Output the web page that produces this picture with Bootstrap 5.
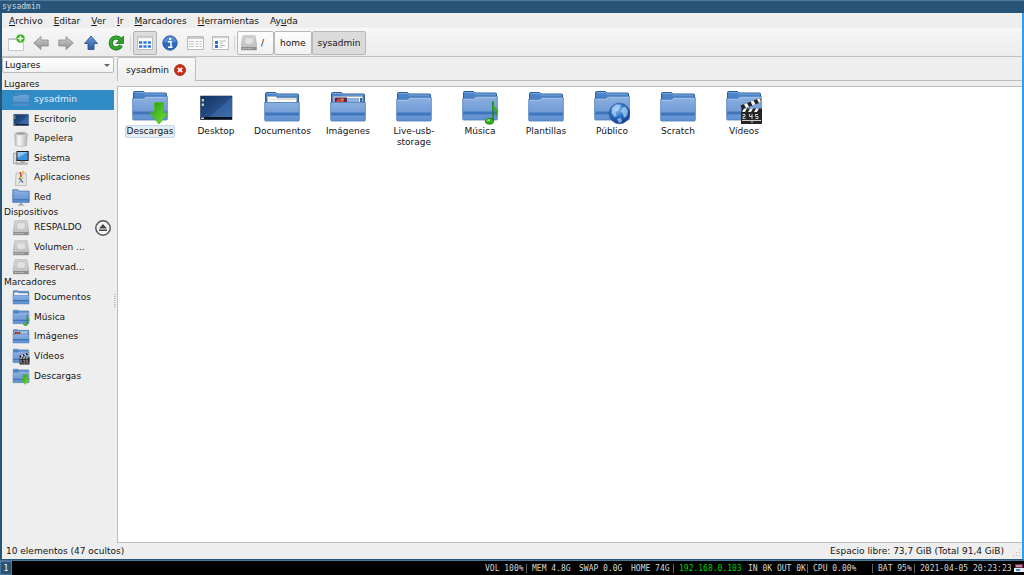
<!DOCTYPE html>
<html lang="es">
<head>
<meta charset="utf-8">
<meta name="viewport" content="width=device-width, initial-scale=1">
<title>sysadmin</title>
<link href="https://cdn.jsdelivr.net/npm/bootstrap@5.3.0/dist/css/bootstrap.min.css" rel="stylesheet">
<style>
  body { font-family: "DejaVu Sans", sans-serif; font-size: 9px; line-height: 11px; color: #141414; background: #000; }
  button, select { font: inherit; color: inherit; }
  svg { display: block; flex: none; }
  .mono { font-family: "DejaVu Sans Mono", monospace; font-size: 8px; line-height: 10px; }
  .titlebar { height: 13px; padding: 1px 2px; background: #285577; border-top: 1px solid #4c7899; color: #cfdbe5; }
  .window { min-height: 0; background: #eee; border-left: 2px solid #285577; border-right: 2px solid #2e9ef4; border-bottom: 1px solid #285577; }
  .menus { height: 15px; padding: 2px; background: #eee; }
  .menus button { border: 0; background: none; padding: 0 6px 0 5px; height: 12px; }
  .menus u { text-underline-offset: 1px; }
  .tools { height: 29px; padding: 1px 2px 0; gap: 1px; background: linear-gradient(#f6f6f6, #ececec); border-top: 1px solid #f8f8f8; border-bottom: 1px solid #c2c2c2; }
  .tool { width: 24px; height: 24px; padding: 0; border: 1px solid transparent; border-radius: 2px; background: none; display: flex; align-items: center; justify-content: center; }
  .tool.active { background: #dcdcdc; border-color: #b2b2b2; }
  .rule { width: 1px; height: 15px; margin: 0 1px; background: #d5d5d5; }
  .crumb { height: 24px; padding: 0 5px; gap: 4px; border: 1px solid #b8b8b8; border-radius: 2px; background: linear-gradient(#fdfdfd, #f1f1f1); display: flex; align-items: center; }
  .crumb.root { padding: 0 9px 0 3px; }
  .crumb.active { background: #dbdbdb; }
  .places { width: 112px; flex: none; }
  .places select { display: block; width: 100%; height: 16px; padding: 0 2px; border: 1px solid #bbb; border-radius: 2px; appearance: none;
    background: linear-gradient(#fff, #f2f2f2); }
  .picker { position: relative; margin-bottom: 6px; }
  .picker::after { content: ""; position: absolute; right: 4px; top: 7px; border: 3px solid transparent; border-top-color: #666; border-bottom: 0; pointer-events: none; }
  .places h2 { font-size: 9px; line-height: 11px; font-weight: 400; margin: 0; padding-left: 2px; }
  .places ul { display: flex; flex-direction: column; margin: 0; padding: 0; list-style: none; }
  .places li { flex: 1 1 0; display: flex; align-items: center; }
  .places a { flex: 1 1 0; min-width: 0; height: 100%; display: flex; align-items: center; gap: 4px; padding-left: 10px; color: inherit; text-decoration: none; }
  .places a.current { background: #308cc6; color: #e3eff8; }
  .places a.current svg { opacity: .6; }
  .rows-3 { height: 59px; } .rows-5 { height: 98px; } .rows-6 { height: 117px; }
  .eject { border: 0; background: none; padding: 0; width: 20px; height: 18px; }
  .splitter { width: 3px; flex: none; }
  .splitter i { display: block; width: 2px; height: 13px; border-left: 1px dotted #bbb; border-right: 1px dotted #ccc; }
  .tabs { height: 24px; }
  .tab { padding: 0 9px 0 8px; gap: 5px; background: linear-gradient(#f8f8f8, #eee); border: 1px solid #bdbdbd; border-bottom: 0; border-radius: 2px 2px 0 0; }
  .tab span { padding-top: 1px; }
  .tab button { border: 0; background: none; padding: 0; }
  .tab-base { border-bottom: 1px solid #bdbdbd; }
  .pane { margin-top: 5px; background: #fff; border: 1px solid #bdbdbd; border-right: 0; min-height: 0; }
  .files { padding: 2px 0; margin-left: -1px; align-content: flex-start; }
  .file { width: 66px; color: inherit; text-decoration: none; text-align: center; }
  .file span { max-width: 60px; padding: 0 1px; border: 1px solid transparent; }
  .file.current span { background: #e4eef7; border-color: #c3d6e6; border-radius: 2px; padding: 0; }
  .status { height: 16px; padding: 1px 18px 0 4px; position: relative; }
  .grip { position: absolute; right: 1px; bottom: 2px; }
  .panel { height: 15px; background: #000; color: #d6d6d6; border-top: 1px solid #4c7899; }
  .desk { width: 12px; border: 1px solid #4c7899; background: #285577; color: #fff; padding: 0; line-height: 11px; }
  .stats { display: grid; grid-template-columns: 47px 47px 52px 48px 69px 65px 65px 42px 98px 12px; align-items: center; white-space: nowrap; }
  .stats span { padding-left: 5px; border-left: 1px solid transparent; height: 9px; line-height: 9px; }
  .stats .bar { border-left-color: #666; }
  .stats .ip { color: #00d000; }
  .stats svg { justify-self: end; }
</style>
</head>
<body class="vh-100 d-flex flex-column overflow-hidden">

<svg width="0" height="0" class="position-absolute" aria-hidden="true">
  <defs>
    <linearGradient id="gFront" x1="0" y1="0" x2="0" y2="1"><stop offset="0" stop-color="#8db0e0"/><stop offset="1" stop-color="#6090d0"/></linearGradient>
    <linearGradient id="gBack" x1="0" y1="0" x2="0" y2="1"><stop offset="0" stop-color="#4f88cb"/><stop offset="1" stop-color="#2f66a9"/></linearGradient>
    <linearGradient id="gGreen" x1="0" y1="0" x2="1" y2="1"><stop offset="0" stop-color="#259a13"/><stop offset="1" stop-color="#7be63c"/></linearGradient>
    <linearGradient id="gGrey" x1="0" y1="0" x2="0" y2="1"><stop offset="0" stop-color="#d0d0d0"/><stop offset="1" stop-color="#8f8f8f"/></linearGradient>
    <linearGradient id="gBlue" x1="0" y1="0" x2="0" y2="1"><stop offset="0" stop-color="#6e9bd8"/><stop offset="1" stop-color="#2c5ba4"/></linearGradient>
    <linearGradient id="gScreen" x1="0" y1="0" x2="1" y2="1"><stop offset="0" stop-color="#12305f"/><stop offset="1" stop-color="#3768a8"/></linearGradient>
    <radialGradient id="gGlobe" cx=".4" cy=".3" r=".7"><stop offset="0" stop-color="#8fc1f2"/><stop offset=".5" stop-color="#2f6fc8"/><stop offset="1" stop-color="#123c8c"/></radialGradient>
    <linearGradient id="gCan" x1="0" y1="0" x2="1" y2="0"><stop offset="0" stop-color="#b5b5b5"/><stop offset=".35" stop-color="#fafafa"/><stop offset="1" stop-color="#b0b0b0"/></linearGradient>
    <linearGradient id="gDisk" x1="0" y1="0" x2="0" y2="1"><stop offset="0" stop-color="#d6d6d6"/><stop offset="1" stop-color="#bcbcbc"/></linearGradient>
  </defs>

  <symbol id="back" viewBox="0 0 36 36"><path d="M1.500 30V4.500Q1.500 3.500 2.500 3.500H11.500L13 5H33.500Q34.500 5 34.500 6V30Z" fill="url(#gBack)" stroke="#2b5c9b"/><path d="M3 4.500H11.500L13 6H33.500" fill="none" stroke="#8ab4e6" stroke-width=".7"/></symbol>
  <symbol id="front" viewBox="0 0 36 36"><path d="M.7 13.500H35.300V31Q35.300 32 34.300 32H1.700Q.7 32 .7 31Z" fill="url(#gFront)" stroke="#4a7dbe" stroke-width=".8"/><path d="M1 23.500H35V26.500H1Z" fill="#3f76bb"/></symbol>
  <symbol id="folder" viewBox="0 0 36 36"><use href="#back"/><path d="M.7 10.500H11.500L14 8.500H35.300V31Q35.300 32 34.300 32H1.700Q.7 32 .7 31Z" fill="url(#gFront)" stroke="#4a7dbe" stroke-width=".8"/><path d="M1.600 11.300H12L14.300 9.300H34.500" fill="none" stroke="#a9c6ec" stroke-width=".8"/><path d="M1 23.500H35V26.500H1Z" fill="#3f76bb"/></symbol>
  <symbol id="docs" viewBox="0 0 36 36"><use href="#back"/><path d="M3.500 14V7.500H12L13 9H32.500V14Z" fill="#fafafa" stroke="#b4b4a8" stroke-width=".7"/><path d="M5 10.500H31" stroke="#e2e2da"/><use href="#front"/></symbol>
  <symbol id="pics" viewBox="0 0 36 36"><use href="#back"/><path d="M3.500 14V7.500H32.500V14Z" fill="#f4f6fa" stroke="#9aa" stroke-width=".5"/><path d="M4.500 8.500H17V13H4.500Z" fill="#5a2555"/><path d="M6 12L9 9L11 11L14 9V13H6Z" fill="#c8453d"/><circle cx="12" cy="10.500" r="1.300" fill="#d8933a"/><path d="M17 9H29V13H17Z" fill="#8fb0dc"/><path d="M30 9H32V13H30Z" fill="#2f62a2"/><use href="#front"/></symbol>
  <symbol id="down" viewBox="0 0 36 36"><use href="#folder" y="-1"/><path d="M22.500 13.500H31.500V24H36L27 35L18 24H22.500Z" fill="url(#gGreen)" stroke="#4cb82a" stroke-width=".9"/></symbol>
  <symbol id="music" viewBox="0 0 36 36"><use href="#folder" y="-1"/><path d="M31 12.500V32" stroke="#188a12" stroke-width="1.600"/><path d="M30.500 12.500Q31 17 34.500 20Q37 23 34 27Q35.500 22 31 19.500Z" fill="#43bb2b" stroke="#188a12" stroke-width=".5"/><ellipse cx="27.500" cy="32.300" rx="4.200" ry="2.900" fill="#35ac20" stroke="#107510" stroke-width=".7"/><ellipse cx="26.500" cy="31.300" rx="1.800" ry="1" fill="#a2ec82"/></symbol>
  <symbol id="globe" viewBox="0 0 36 36"><use href="#folder" y="-1"/><circle cx="25.500" cy="24.500" r="10.300" fill="url(#gGlobe)" stroke="#1d4b96" stroke-width=".6"/><path d="M18 19L22 15.500L27 16L25 20L21.500 23.500L23 27L20.500 28L17.500 24ZM28 19L31.500 17.500L34 22L33 27L30 29L29 25L27 22.500ZM23 30L27 29L28 32.500L25 34Z" fill="#bfe0fa" opacity=".65"/></symbol>
  <symbol id="video" viewBox="0 0 36 36"><use href="#folder" y="-1"/><path d="M15 22H36V35H15Z" fill="#262626"/><path d="M14.500 16.500L34 9L35.500 13L16 20.500Z" fill="#222"/><path d="M18 15.200L21 14L23 17.700L20 18.900ZM24.500 12.600L27.500 11.500L29.500 15.200L26.500 16.400ZM31 10.200L33.500 9.300L35 13L33 13.900Z" fill="#f5f5f5"/><path d="M15.500 19.500H36V23H15.500Z" fill="#222"/><path d="M18 19.500H21L19 23H16ZM24 19.500H27L25 23H22ZM30 19.500H33L31 23H28Z" fill="#f5f5f5"/><path d="M16.500 25.500H19V27.500H17V29.500H19.500M23.500 25V27.500H26.500M26 25V30M32 25.500H29.500V27.500H32V29.500H29.500M16 31.500H35M26 32V34" stroke="#ddd" fill="none" stroke-width=".9"/></symbol>
  <symbol id="desktop" viewBox="0 0 36 36"><path d="M2.500 7H34V30.500H2.500Z" fill="url(#gScreen)" stroke="#1b355f" stroke-width=".6"/><path d="M9 30L34 8V30Z" fill="#4a80c4" opacity=".35"/><path d="M2.500 28H34V30.500H2.500Z" fill="#0a0f1c"/><path d="M3.700 10H6V12.500H3.700ZM3.700 14.500H6V17H3.700Z" fill="#bcd4b2"/><path d="M3 28.500H6V30H3Z" fill="#ccc"/></symbol>
  <symbol id="disk" viewBox="0 0 16 16"><path d="M2 .7H14L15.700 10V15H.3V10Z" fill="url(#gDisk)" stroke="#a0a0a0" stroke-width=".5"/><ellipse cx="8" cy="6" rx="4.500" ry="3.500" fill="#e2e2e2" stroke="#bcbcbc" stroke-width=".6"/><path d="M.5 12H15.500V15H.5Z" fill="#8f8f8f"/><path d="M2 13.500H11" stroke="#c8c8c8" stroke-dasharray="1 .6"/></symbol>
  <symbol id="trash" viewBox="0 0 16 16"><path d="M1.500 2.500L2.500 14.500Q8 16.500 13.500 14.500L14.500 2.500Z" fill="url(#gCan)" stroke="#a5a5a5" stroke-width=".5"/><ellipse cx="8" cy="2.500" rx="6.300" ry="1.700" fill="#9d9d9d" stroke="#e6e6e6" stroke-width=".9"/></symbol>
  <symbol id="computer" viewBox="0 0 16 16"><path d="M.5 3H3.500V13.500H.5Z" fill="#d9d9d9" stroke="#777" stroke-width=".5"/><path d="M3.500 1H15.700V11H3.500Z" fill="#222"/><path d="M4.500 2H14.700V10H4.500Z" fill="#3f8fdf"/><path d="M4.500 2H14.700L4.500 8Z" fill="#8cc4f4"/><path d="M7.500 11H11.500V12.500H7.500ZM4 12.700H14.500V14.500H3Z" fill="#bbb" stroke="#888" stroke-width=".3"/></symbol>
  <symbol id="apps" viewBox="0 0 16 16"><path d="M3 3H13L13.500 15.500H2.500Z" fill="#e6e6e6" stroke="#a2a2a2" stroke-width=".6"/><path d="M6.500 9L10.500 1" stroke="#e2b52c" stroke-width="1.600"/><path d="M7 2L8.500 7" stroke="#c43b4f" stroke-width="1.200"/><path d="M6 8L10 12.500" stroke="#5a6f93" stroke-width="1.300"/><path d="M10 7.500L6 13" stroke="#999"/></symbol>
  <symbol id="net" viewBox="0 0 16 16"><path d="M.3 12.500V.7H5L6 2H15.700V12.500Z" fill="url(#gFront)" stroke="#3568aa" stroke-width=".7"/><path d="M.6 9.500H15.400V10.700H.6Z" fill="#3f76bb"/><path d="M7 13H9V14.500H11V15.500H5V14.500H7Z" fill="#8c99a8"/></symbol>
</svg>

<header class="titlebar mono">sysadmin</header>

<div class="window flex-fill d-flex flex-column">
  <nav class="menus d-flex">
    <button><u>A</u>rchivo</button><button><u>E</u>ditar</button><button><u>V</u>er</button><button><u>I</u>r</button><button><u>M</u>arcadores</button><button><u>H</u>erramientas</button><button>Ay<u>u</u>da</button>
  </nav>

  <div class="tools d-flex align-items-center" role="toolbar">
    <button class="tool" aria-label="Nueva pestaña"><svg width="18" height="18" viewBox="0 0 18 18"><path d="M1.500 5.500H16.500V16.500H1.500Z" fill="#fbfbfb" stroke="#c9c9c9"/><path d="M1.500 5H16.500" stroke="#bdbdbd" stroke-width="1.500"/><circle cx="13.500" cy="4.500" r="4.300" fill="#2fb414" stroke="#a5dd92" stroke-width=".6"/><path d="M13.500 1.800V7.200M10.800 4.500H16.200" stroke="#fff" stroke-width="1.500"/></svg></button>
    <button class="tool" aria-label="Atrás"><svg width="16" height="16" viewBox="0 0 16 16"><path d="M.7 8L8 1.500V5H15.200V11H8V14.500Z" fill="url(#gGrey)" stroke="#8c8c8c" stroke-width=".8"/></svg></button>
    <button class="tool" aria-label="Adelante"><svg width="16" height="16" viewBox="0 0 16 16"><path d="M15.300 8L8 1.500V5H.8V11H8V14.500Z" fill="url(#gGrey)" stroke="#8c8c8c" stroke-width=".8"/></svg></button>
    <button class="tool" aria-label="Subir"><svg width="16" height="16" viewBox="0 0 16 16"><path d="M8 1L14.500 8.500H11V14.500H5V8.500H1.500Z" fill="url(#gBlue)" stroke="#234d8c" stroke-width=".8"/></svg></button>
    <button class="tool" aria-label="Recargar"><svg width="16" height="16" viewBox="0 0 16 16"><path d="M12.500 4.500A5.500 5.500 0 1 0 13 10.500" fill="none" stroke="#126b17" stroke-width="4"/><path d="M15.500 1V8.500H8Z" fill="#2f9e2c" stroke="#126b17" stroke-width=".7"/><path d="M12.500 4.500A5.500 5.500 0 1 0 13 10.500" fill="none" stroke="#35a72e" stroke-width="2.600"/></svg></button>
    <span class="rule"></span>
    <button class="tool active" aria-label="Vista de iconos"><svg width="16" height="16" viewBox="0 0 16 16"><path d="M.5 1.500H15.500V14.500H.5Z" fill="#fcfcfc" stroke="#bcbcbc"/><path d="M1 2.500H15" stroke="#d3d3d3" stroke-width="1.500"/><path d="M2 7.500H14M2 11.500H14" stroke="#2f78d6" stroke-width="2.400" stroke-dasharray="3.200 1.200"/></svg></button>
    <button class="tool" aria-label="Vista con miniaturas"><svg width="16" height="16" viewBox="0 0 16 16"><circle cx="8" cy="8" r="7.200" fill="#2b6cc0" stroke="#1f4f96" stroke-width=".8"/><path d="M1.500 7Q3 1.500 8 1.300Q13 1.500 14.500 7Q8 8.500 1.500 7Z" fill="#6fa3e2" opacity=".6"/><path d="M6 6.700H9V12M6 12.300H10.500" fill="none" stroke="#fff" stroke-width="1.500"/><circle cx="8.200" cy="4" r="1.200" fill="#fff"/></svg></button>
    <button class="tool" aria-label="Vista compacta"><svg width="17" height="16" viewBox="0 0 17 16"><path d="M.5 1.500H16.500V14.500H.5Z" fill="#fcfcfc" stroke="#bcbcbc"/><path d="M1 3H16" stroke="#c9c9c9" stroke-width="2"/><path d="M2 6.500H7M2 9H7M2 11.500H7M8.500 6.500H11M8.500 9H11M8.500 11.500H11M12.500 6.500H15M12.500 9H15M12.500 11.500H15" stroke="#c4c4c4"/></svg></button>
    <button class="tool" aria-label="Vista detallada"><svg width="17" height="16" viewBox="0 0 17 16"><path d="M.5 1.500H16.500V14.500H.5Z" fill="#fcfcfc" stroke="#bcbcbc"/><path d="M1 2.500H16" stroke="#d3d3d3" stroke-width="1.500"/><path d="M3 6H6V9H3ZM3 10H6V13H3Z" fill="#2471cf"/><path d="M7.500 6H14M7.500 8H11M7.500 10.500H13M7.500 12.500H10" stroke="#bcbcbc"/></svg></button>
    <span class="rule"></span>
    <div class="d-flex">
      <button class="crumb root"><svg width="16" height="16"><use href="#disk"/></svg>/</button><button class="crumb">home</button><button class="crumb active">sysadmin</button>
    </div>
  </div>

  <div class="flex-fill d-flex" style="min-height:0">
    <aside class="places">
      <div class="picker"><select aria-label="Panel lateral"><option>Lugares</option></select></div>
      <h2>Lugares</h2>
      <ul class="rows-6">
        <li><a href="#" class="current"><svg width="18" height="17"><use href="#folder"/></svg>sysadmin</a></li>
        <li><a href="#"><svg width="18" height="17"><use href="#desktop"/></svg>Escritorio</a></li>
        <li><a href="#"><svg width="18" height="16"><use href="#trash"/></svg>Papelera</a></li>
        <li><a href="#"><svg width="18" height="16"><use href="#computer"/></svg>Sistema</a></li>
        <li><a href="#"><svg width="18" height="16"><use href="#apps"/></svg>Aplicaciones</a></li>
        <li><a href="#"><svg width="18" height="17"><use href="#net"/></svg>Red</a></li>
      </ul>
      <h2>Dispositivos</h2>
      <ul class="rows-3">
        <li><a href="#"><svg width="18" height="16"><use href="#disk"/></svg>RESPALDO</a><button class="eject" aria-label="Expulsar"><svg width="18" height="18" viewBox="0 0 18 18"><circle cx="9" cy="9" r="7.200" fill="#f4f4f4" stroke="#555" stroke-width="1.500"/><path d="M9 5L13 9.500H5ZM5 10.500H13V12H5Z" fill="#444"/></svg></button></li>
        <li><a href="#"><svg width="18" height="16"><use href="#disk"/></svg>Volumen ...</a></li>
        <li><a href="#"><svg width="18" height="16"><use href="#disk"/></svg>Reservad...</a></li>
      </ul>
      <h2>Marcadores</h2>
      <ul class="rows-5">
        <li><a href="#"><svg width="18" height="17"><use href="#docs"/></svg>Documentos</a></li>
        <li><a href="#"><svg width="18" height="17"><use href="#music"/></svg>Música</a></li>
        <li><a href="#"><svg width="18" height="17"><use href="#pics"/></svg>Imágenes</a></li>
        <li><a href="#"><svg width="18" height="17"><use href="#video"/></svg>Vídeos</a></li>
        <li><a href="#"><svg width="18" height="17"><use href="#down"/></svg>Descargas</a></li>
      </ul>
    </aside>
    <div class="splitter d-flex align-items-center"><i></i></div>

    <main class="flex-fill d-flex flex-column">
      <div class="tabs d-flex">
        <div class="tab d-flex align-items-center"><span>sysadmin</span><button aria-label="Cerrar"><svg width="12" height="12" viewBox="0 0 12 12"><circle cx="6" cy="6" r="5.500" fill="#cf2a14" stroke="#8e1a0c" stroke-width=".7"/><path d="M3.800 3.800L8.200 8.200M8.200 3.800L3.800 8.200" stroke="#fff" stroke-width="1.700"/></svg></button></div>
        <div class="tab-base flex-fill"></div>
      </div>
      <div class="pane flex-fill">
        <div class="files d-flex flex-wrap">
          <a href="#" class="file current d-flex flex-column align-items-center"><svg width="36" height="36"><use href="#down"/></svg><span>Descargas</span></a>
          <a href="#" class="file d-flex flex-column align-items-center"><svg width="36" height="36"><use href="#desktop"/></svg><span>Desktop</span></a>
          <a href="#" class="file d-flex flex-column align-items-center"><svg width="36" height="36"><use href="#docs"/></svg><span>Documentos</span></a>
          <a href="#" class="file d-flex flex-column align-items-center"><svg width="36" height="36"><use href="#pics"/></svg><span>Imágenes</span></a>
          <a href="#" class="file d-flex flex-column align-items-center"><svg width="36" height="36"><use href="#folder"/></svg><span>Live-usb-<br>storage</span></a>
          <a href="#" class="file d-flex flex-column align-items-center"><svg width="36" height="36"><use href="#music"/></svg><span>Música</span></a>
          <a href="#" class="file d-flex flex-column align-items-center"><svg width="36" height="36"><use href="#folder"/></svg><span>Plantillas</span></a>
          <a href="#" class="file d-flex flex-column align-items-center"><svg width="36" height="36"><use href="#globe"/></svg><span>Público</span></a>
          <a href="#" class="file d-flex flex-column align-items-center"><svg width="36" height="36"><use href="#folder"/></svg><span>Scratch</span></a>
          <a href="#" class="file d-flex flex-column align-items-center"><svg width="36" height="36"><use href="#video"/></svg><span>Vídeos</span></a>
        </div>
      </div>
    </main>
  </div>

  <footer class="status d-flex align-items-center justify-content-between">
    <span>10 elementos (47 ocultos)</span><span>Espacio libre: 73,7 GiB (Total 91,4 GiB)</span>
    <svg class="grip" width="8" height="8" viewBox="0 0 8 8"><path d="M6 0H7V1H6ZM3 3H4V4H3ZM6 3H7V4H6ZM0 6H1V7H0ZM3 6H4V7H3ZM6 6H7V7H6Z" fill="#bbb"/></svg>
  </footer>
</div>

<div class="panel mono d-flex justify-content-between">
  <button class="desk">1</button>
  <div class="stats">
    <span>VOL 100%</span><span class="bar">MEM 4.8G</span><span>SWAP 0.0G</span><span>HOME 74G</span><span class="bar ip">192.168.0.103</span><span>IN 0K OUT 0K</span><span class="bar">CPU 0.00%</span><span class="bar">BAT 95%</span><span class="bar">2021-04-05 20:23:23</span>
    <svg width="10" height="10" viewBox="0 0 10 10"><path d="M1 1H9V6H1Z" fill="#6d3552"/><path d="M2 2H8V4H2Z" fill="#c9809a"/><path d="M0 5H10V9H0Z" fill="#e8eef5"/><path d="M2 6H6V8H2Z" fill="#3a8fd0"/></svg>
  </div>
</div>

<script src="https://cdn.jsdelivr.net/npm/bootstrap@5.3.0/dist/js/bootstrap.bundle.min.js"></script>
</body>
</html>
